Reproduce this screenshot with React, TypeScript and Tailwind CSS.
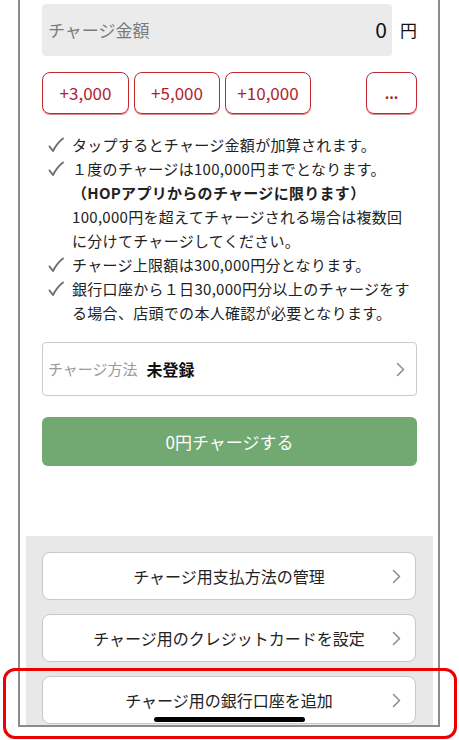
import React from "react";

const Chevron = ({ className = "" }: { className?: string }) => (
  <svg width="9" height="15" viewBox="0 0 9 15" className={className}>
    <polyline points="1.5,1.5 7.5,7.5 1.5,13.5" fill="none" stroke="#8f8f8f" strokeWidth="1.6" strokeLinecap="round" strokeLinejoin="round" />
  </svg>
);

const Check = () => (
  <svg width="16" height="16" viewBox="0 0 16 16">
    <path d="M1.5 9.5 L5 14 Q9 6 15 1.5" fill="none" stroke="#6e6e6e" strokeWidth="1.9" strokeLinecap="round" strokeLinejoin="round" />
  </svg>
);

const Note = ({ check, children, bold }: { check?: boolean; children: React.ReactNode; bold?: boolean }) => (
  <div className="flex h-[24px] items-center">
    <span className="flex w-[24px] shrink-0 items-center">{check ? <Check /> : null}</span>
    <span className={bold ? "font-bold text-[#222]" : "text-[#222]"}>{children}</span>
  </div>
);

const MenuButton = ({ label }: { label: string }) => (
  <div className="relative flex h-[48px] items-center justify-center rounded-[8px] border border-[#c8c8c8] bg-white text-[16px] text-[#222]">
    <span>{label}</span>
    <Chevron className="absolute right-[14px]" />
  </div>
);

export default function App() {
  const font = { fontFamily: '"Noto Sans CJK JP", "Noto Sans", sans-serif' };
  return (
    <div className="relative h-[740px] w-[459px] overflow-hidden bg-white" style={font}>
      <div className="relative ml-[18px] flex h-[727px] w-[422px] flex-col border-x-2 border-b-2 border-[#8c8c8c] bg-white">
        <div className="pl-[22px] pr-[21px]">
          <div className="mt-[4px] flex items-center">
            <div className="flex h-[52px] flex-1 items-center justify-between rounded-[4px] bg-[#ebebeb] pl-[6px] pr-[5px]">
              <span className="text-[17px] text-[#7a7a7a]">チャージ金額</span>
              <span className="text-[21px] text-[#111]">0</span>
            </div>
            <span className="ml-[8px] w-[17px] text-[17px] text-[#111]">円</span>
          </div>
          <div className="mt-[16px] flex h-[42px] items-stretch">
            <div className="flex w-[87px] items-center justify-center rounded-[8px] border border-[#c0282e] text-[17px] text-[#b3222a] shadow-[0_1px_0_#d98a8a]">+3,000</div>
            <div className="ml-[5px] flex w-[86px] items-center justify-center rounded-[8px] border border-[#c0282e] text-[17px] text-[#b3222a] shadow-[0_1px_0_#d98a8a]">+5,000</div>
            <div className="ml-[5px] flex w-[86px] items-center justify-center rounded-[8px] border border-[#c0282e] text-[17px] text-[#b3222a] shadow-[0_1px_0_#d98a8a]">+10,000</div>
            <div className="ml-auto flex w-[51px] items-center justify-center rounded-[8px] border border-[#c0282e] text-[14px] font-bold text-[#b3222a] shadow-[0_1px_0_#d98a8a]">...</div>
          </div>
          <div className="mt-[19px] pl-[6px] text-[15px] tracking-[0.02em]">
            <Note check>タップするとチャージ金額が加算されます。</Note>
            <Note check>１度のチャージは100,000円までとなります。</Note>
            <Note bold>（HOPアプリからのチャージに限ります）</Note>
            <Note>100,000円を超えてチャージされる場合は複数回</Note>
            <Note>に分けてチャージしてください。</Note>
            <Note check>チャージ上限額は300,000円分となります。</Note>
            <Note check>銀行口座から１日30,000円分以上のチャージをす</Note>
            <Note>る場合、店頭での本人確認が必要となります。</Note>
          </div>
          <div className="relative mt-[17px] flex h-[54px] items-center rounded-[4px] border border-[#cccccc] pl-[5px]">
            <span className="text-[15px] text-[#9a9a9a]">チャージ方法</span>
            <span className="ml-[9px] text-[16px] font-bold text-[#111]">未登録</span>
            <Chevron className="absolute right-[11px]" />
          </div>
          <div className="mt-[21px] flex h-[49px] items-center justify-center rounded-[6px] bg-[#72a872] text-[17px] text-white">
            0円チャージする
          </div>
        </div>
        <div className="mb-0 ml-[6px] mr-[5px] mt-[70px] flex flex-1 flex-col gap-[14px] bg-[#e8e8e8] pl-[16px] pr-[17px] pt-[16px]">
          <MenuButton label="チャージ用支払方法の管理" />
          <MenuButton label="チャージ用のクレジットカードを設定" />
          <MenuButton label="チャージ用の銀行口座を追加" />
        </div>
        <div className="absolute bottom-[3px] left-[134px] h-[5px] w-[151px] rounded-full bg-black" />
      </div>
      <div className="absolute left-[3px] top-[668px] h-[71px] w-[454px] rounded-[12px] border-[3px] border-[#ee0000]" />
    </div>
  );
}
